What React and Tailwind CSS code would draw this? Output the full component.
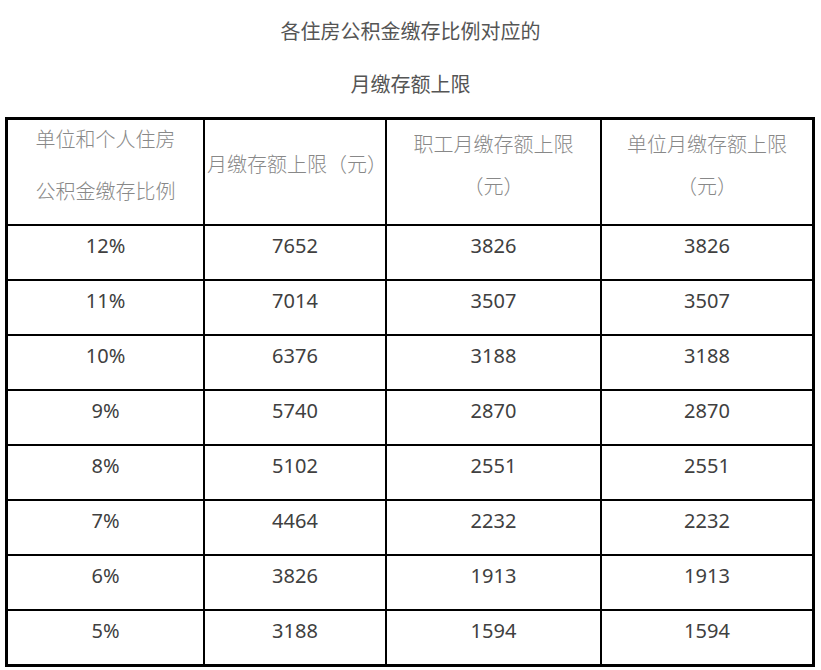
import React from 'react';

const rows = [
  ['12%', '7652', '3826', '3826'],
  ['11%', '7014', '3507', '3507'],
  ['10%', '6376', '3188', '3188'],
  ['9%', '5740', '2870', '2870'],
  ['8%', '5102', '2551', '2551'],
  ['7%', '4464', '2232', '2232'],
  ['6%', '3826', '1913', '1913'],
  ['5%', '3188', '1594', '1594'],
];

const cjk = { fontFamily: '"Noto Sans CJK SC", "Noto Sans", sans-serif' };
const num = { fontFamily: '"Noto Sans", "Noto Sans CJK SC", sans-serif' };

const App = () => {
  return (
    <div className="w-[821px] h-[670px] bg-white overflow-hidden" style={cjk}>
      <div className="pt-[19px] flex flex-col items-center text-[20px] leading-[24px] text-[#555]">
        <div>各住房公积金缴存比例对应的</div>
        <div className="mt-[29px]">月缴存额上限</div>
      </div>

      <div className="ml-[5px] mt-[21px] w-[810px] border-[3px] border-black grid grid-cols-[197px_182px_215px_210px]">
        {/* header row */}
        <div className="h-[106px] border-r-2 border-b-2 border-black flex flex-col items-center pt-[7px] text-[20px] leading-[24px] text-[#888] font-light">
          <div>单位和个人住房</div>
          <div className="mt-[28px]">公积金缴存比例</div>
        </div>
        <div className="h-[106px] border-r-2 border-b-2 border-black pl-[2px] pt-[32px] text-[20px] leading-[24px] text-[#888] font-light whitespace-nowrap">
          月缴存额上限（元）
        </div>
        <div className="h-[106px] border-r-2 border-b-2 border-black flex flex-col items-center pt-[12px] text-[20px] leading-[24px] text-[#888] font-light">
          <div>职工月缴存额上限</div>
          <div className="mt-[18px]">（元）</div>
        </div>
        <div className="h-[106px] border-b-2 border-black flex flex-col items-center pt-[12px] text-[20px] leading-[24px] text-[#888] font-light">
          <div>单位月缴存额上限</div>
          <div className="mt-[18px]">（元）</div>
        </div>

        {rows.map((r, i) => {
          const last = i === rows.length - 1;
          return r.map((v, j) => (
            <div
              key={i + '-' + j}
              className={`${last ? 'h-[53px]' : 'h-[55px] border-b-2'} ${j < 3 ? 'border-r-2' : ''} border-black text-center pt-[8px] text-[20px] leading-[24px] text-[#404040]`}
              style={num}
            >
              {v}
            </div>
          ));
        })}
      </div>
    </div>
  );
};

export default App;
